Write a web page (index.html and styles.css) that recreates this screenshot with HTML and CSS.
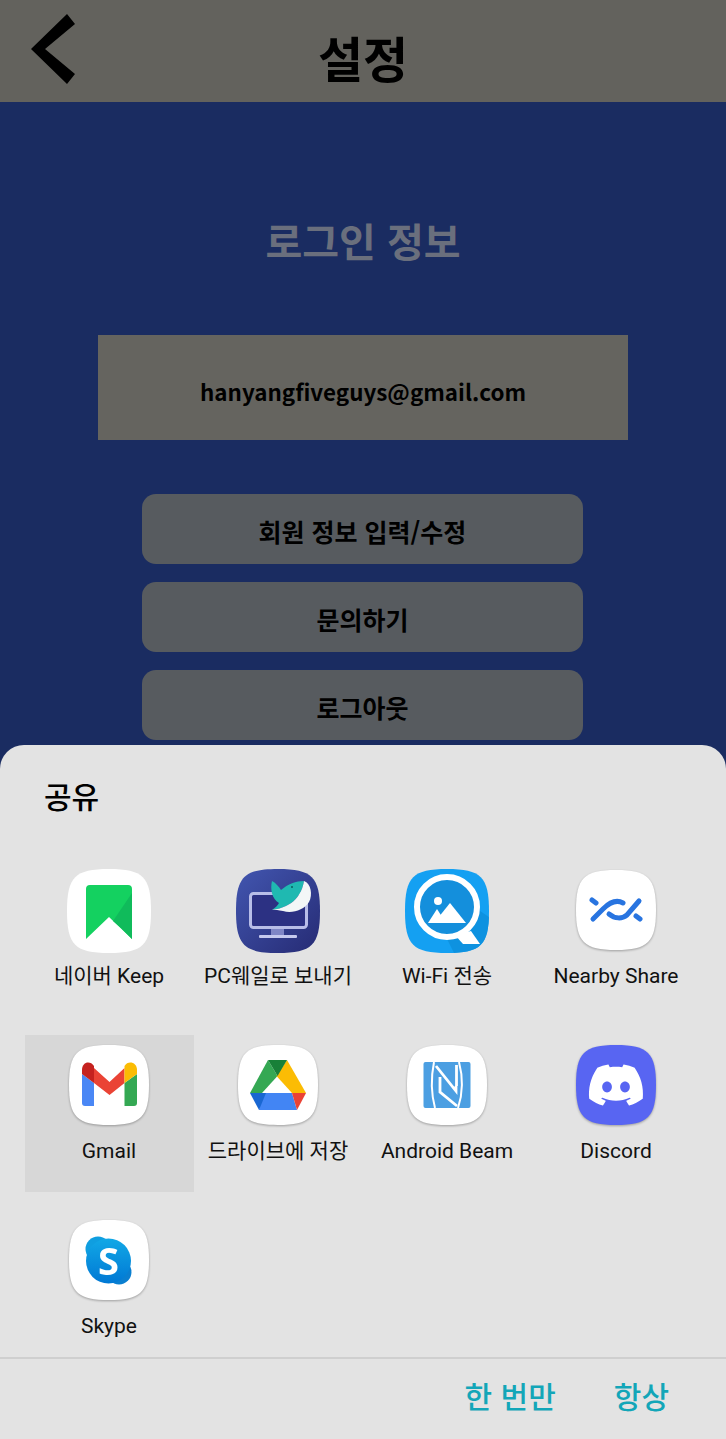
FILE: index.html
```html
<!DOCTYPE html>
<html lang="ko">
<head>
<meta charset="utf-8">
<title>설정</title>
<link rel="stylesheet" href="styles.css">
</head>
<body>
<div class="screen">
  <header class="topbar">
    <svg class="back" viewBox="0 0 44 70" aria-hidden="true"><polygon points="0,35 36,0 44,10 14,35 44,60 36,70"/></svg>
    <h1 class="topbar-title">설정</h1>
  </header>
  <main class="content">
    <h2 class="section-title">로그인 정보</h2>
    <div class="email">hanyangfiveguys@gmail.com</div>
    <div class="actions">
      <div class="action">회원 정보 입력/수정</div>
      <div class="action">문의하기</div>
      <div class="action">로그아웃</div>
    </div>
  </main>
  <section class="sheet">
    <div class="sheet-title">공유</div>
    <div class="apps">
      <div class="app">
        <svg class="icon icon-lg" viewBox="0 0 84 84"><path class="sq-white" d="M42 0C76 0 84 8 84 42S76 84 42 84 0 76 0 42 8 0 42 0Z"/><path fill="#14d160" d="M19 20q0-4 4-4h38q4 0 4 4v50L42 48 19 70Z"/><path fill="#10bb5b" d="M65 24V70L54 59 46 52Z"/></svg>
        <div class="label">네이버 Keep</div>
      </div>
      <div class="app">
        <svg class="icon icon-lg" viewBox="0 0 84 84"><defs><linearGradient id="pc" x1="0" y1="0" x2="1" y2="1"><stop offset="0" stop-color="#4256b0"/><stop offset="1" stop-color="#262b74"/></linearGradient></defs><path fill="url(#pc)" d="M42 0C76 0 84 8 84 42S76 84 42 84 0 76 0 42 8 0 42 0Z"/><rect x="14.500" y="24.500" width="56" height="34" rx="3" fill="#2c3183" stroke="#b8bde8" stroke-width="3"/><rect x="35" y="60" width="13" height="7" fill="#7f86c6"/><rect x="23" y="66" width="38" height="3" rx="1" fill="#c5c9ee"/><path fill="#1fb9b1" d="M36 12C40 14 43 18 45 21 52 15 60 12 68 12 66 25 58 38 36 41 40 38 42 36 43 34 36 30 34 20 36 12Z"/><path fill="#f3f7f7" d="M68 12C75 14 77 26 73 33 68 41 56 45 47 42 42 41 40 41 36 41 58 38 66 25 68 12Z"/><circle cx="56" cy="18" r="1" fill="#0b5f60"/></svg>
        <div class="label">PC웨일로 보내기</div>
      </div>
      <div class="app">
        <svg class="icon icon-lg" viewBox="0 0 84 84"><defs><clipPath id="wf"><path d="M42 0C76 0 84 8 84 42S76 84 42 84 0 76 0 42 8 0 42 0Z"/></clipPath></defs><path fill="#14a0f2" d="M42 0C76 0 84 8 84 42S76 84 42 84 0 76 0 42 8 0 42 0Z"/><path fill="#0e92e0" clip-path="url(#wf)" d="M72 40 90 52V90H52L42 70Z"/><circle cx="42" cy="38" r="30" fill="#148fdc" stroke="#fff" stroke-width="6"/><path fill="#fff" d="M50 66 66 62 75 75H58Z"/><circle cx="33" cy="32" r="4" fill="#fff"/><path fill="#fff" d="M45 34 61 54H29Z"/><path fill="#fff" d="M32 40 41 54H23Z"/></svg>
        <div class="label">Wi-Fi 전송</div>
      </div>
      <div class="app">
        <svg class="icon icon-sm" viewBox="0 0 80 80"><path class="sq-white" d="M40 0C72 0 80 8 80 40S72 80 40 80 0 72 0 40 8 0 40 0Z"/><g fill="none" stroke="#2874e0" stroke-width="5" stroke-linecap="round"><path d="M17 49 27 39C33 33 40 29 47 33"/><path d="M33 44C39 49 46 49 51 45L63 31"/><path d="M16 30l4 3"/><path d="M60 46l4 3"/></g></svg>
        <div class="label">Nearby Share</div>
      </div>
      <div class="app app-active">
        <svg class="icon icon-sm" viewBox="0 0 80 80"><path class="sq-white" d="M40 0C72 0 80 8 80 40S72 80 40 80 0 72 0 40 8 0 40 0Z"/><path fill="#4a87f5" d="M13 29 25 38V61H16Q13 61 13 58Z"/><path fill="#34a853" d="M68 29 55.500 38V61H65Q68 61 68 58Z"/><path fill="#ea4335" d="M25 23 40.500 37 55.500 23V38L40.500 50 25 38Z"/><path fill="#c5221f" d="M13 29V25C13 17 21 15 25 21V38Z"/><path fill="#fbbc04" d="M68 29V25C68 17 59 15 55.500 21V38Z"/></svg>
        <div class="label">Gmail</div>
      </div>
      <div class="app">
        <svg class="icon icon-sm" viewBox="0 0 80 80"><path class="sq-white" d="M40 0C72 0 80 8 80 40S72 80 40 80 0 72 0 40 8 0 40 0Z"/><path fill="#34a853" d="M30 15 39.500 31 24 48H12Z"/><path fill="#fbbc04" d="M49 15 68 48H54L38.500 31Z"/><path fill="#4285f4" d="M24 48H54L59 65H21Z"/><path fill="#1967d2" d="M12 48H28L21 65Z"/><path fill="#ea4335" d="M54 48H68L59 65Z"/><path fill="#188038" d="M30 15H49L39.500 31Z"/></svg>
        <div class="label">드라이브에 저장</div>
      </div>
      <div class="app">
        <svg class="icon icon-sm" viewBox="0 0 80 80"><path class="sq-white" d="M40 0C72 0 80 8 80 40S72 80 40 80 0 72 0 40 8 0 40 0Z"/><rect x="16.500" y="17" width="47" height="46" rx="2" fill="#4c9fe2"/><g fill="none" stroke="#fff" stroke-width="2"><path d="M27 17C24 32 24 48 28 63"/><path d="M52 17C56 32 56 48 51 63"/></g><g fill="none" stroke="#fff" stroke-width="2.800"><path d="M29 21 49 46V41"/><path d="M33 32V47L50 61"/><path d="M49.500 20V41"/></g></svg>
        <div class="label">Android Beam</div>
      </div>
      <div class="app">
        <svg class="icon icon-sm" viewBox="0 0 80 80"><path fill="#5865f2" d="M40 0C72 0 80 8 80 40S72 80 40 80 0 72 0 40 8 0 40 0Z"/><g transform="translate(13 13) scale(2.250)"><path fill="#fff" d="M20.317 4.3698a19.7913 19.7913 0 00-4.8851-1.5152.0741.0741 0 00-.0785.0371c-.211.3753-.4447.8648-.6083 1.2495-1.8447-.2762-3.68-.2762-5.4868 0-.1636-.3933-.4058-.8742-.6177-1.2495a.077.077 0 00-.0785-.037 19.7363 19.7363 0 00-4.8852 1.515.0699.0699 0 00-.0321.0277C.5334 9.0458-.319 13.5799.0992 18.0578a.0824.0824 0 00.0312.0561c2.0528 1.5076 4.0413 2.4228 5.9929 3.0294a.0777.0777 0 00.0842-.0276c.4616-.6304.8731-1.2952 1.226-1.9942a.076.076 0 00-.0416-.1057c-.6528-.2476-1.2743-.5495-1.8722-.8923a.077.077 0 01-.0076-.1277c.1258-.0943.2517-.1923.3718-.2914a.0743.0743 0 01.0776-.0105c3.9278 1.7933 8.18 1.7933 12.0614 0a.0739.0739 0 01.0785.0095c.1202.099.246.1981.3728.2924a.077.077 0 01-.0066.1276 12.2986 12.2986 0 01-1.873.8914.0766.0766 0 00-.0407.1067c.3604.698.7719 1.3628 1.225 1.9932a.076.076 0 00.0842.0286c1.961-.6067 3.9495-1.5219 6.0023-3.0294a.077.077 0 00.0313-.0552c.5004-5.177-.8382-9.6739-3.5485-13.6604a.061.061 0 00-.0312-.0286zM8.02 15.3312c-1.1825 0-2.1569-1.0857-2.1569-2.419 0-1.3332.9555-2.4189 2.157-2.4189 1.2108 0 2.1757 1.0952 2.1568 2.419 0 1.3332-.9555 2.4189-2.1569 2.4189zm7.9748 0c-1.1825 0-2.1569-1.0857-2.1569-2.419 0-1.3332.9554-2.4189 2.1569-2.4189 1.2108 0 2.1757 1.0952 2.1568 2.419 0 1.3332-.946 2.4189-2.1568 2.4189Z"/></g></svg>
        <div class="label">Discord</div>
      </div>
      <div class="app">
        <svg class="icon icon-sm" viewBox="0 0 80 80"><defs><linearGradient id="sk" x1="0" y1="0" x2="0" y2="1"><stop offset="0" stop-color="#12a8e6"/><stop offset="1" stop-color="#0078d4"/></linearGradient></defs><path class="sq-white" d="M40 0C72 0 80 8 80 40S72 80 40 80 0 72 0 40 8 0 40 0Z"/><circle cx="29" cy="29" r="12.500" fill="#0f9ee0"/><circle cx="50" cy="52" r="12.500" fill="#0a7fd0"/><circle cx="39.500" cy="41" r="22.500" fill="url(#sk)"/><text class="skype-s" x="39.500" y="55">S</text></svg>
        <div class="label">Skype</div>
      </div>
    </div>
    <footer class="sheet-footer">
      <span class="sheet-btn">한 번만</span>
      <span class="sheet-btn">항상</span>
    </footer>
  </section>
</div>
</body>
</html>
```

FILE: styles.css
```css
* { box-sizing: border-box; }
html, body { margin: 0; padding: 0; }
body { font-family: "Noto Sans CJK KR", "Noto Sans", sans-serif; }
.screen { position: relative; width: 726px; height: 1439px; overflow: hidden; background: #1a2c61; }

.topbar { height: 102px; background: #63625d; display: grid; grid-template-columns: 1fr auto 1fr; align-items: center; }
.back { width: 44px; height: 70px; margin-left: 31px; fill: #000; margin-top: -4px; }
.topbar-title { margin: 12px 0 0; font-size: 49px; line-height: 60px; font-weight: 700; color: #000; }

.content { display: flex; flex-direction: column; align-items: center; padding-top: 113px; }
.section-title { margin: 0 0 2px; font-size: 40px; line-height: 50px; font-weight: 700; color: #6a6f7d; }
.email { margin-top: 68px; width: 530px; height: 105px; padding-top: 6px; background: #65645f; display: flex; align-items: center; justify-content: center; font-size: 22.400px; font-weight: 700; color: #000; }
.actions { margin: 54px 1px 0 0; width: 441px; display: flex; flex-direction: column; gap: 18px; }
.action { height: 70px; padding-top: 4px; border-radius: 14px; background: #575b5f; display: flex; align-items: center; justify-content: center; font-size: 25px; font-weight: 700; color: #000; }

.sheet { position: absolute; left: 0; right: 0; bottom: 0; top: 745px; background: #e3e3e3; border-radius: 24px 24px 0 0; padding-top: 30px; }
.sheet-title { padding-left: 44px; font-size: 30px; line-height: 40px; font-weight: 500; color: #000; }
.apps { margin: 45px 0 0 25px; display: grid; grid-template-columns: repeat(4, 169px); grid-template-rows: 157px 157px 137px; row-gap: 18px; }
.app { padding: 9px 1px 0 0; display: flex; flex-direction: column; align-items: center; }
.app-active { background: #d7d7d7; }
.icon { display: block; flex: none; }
.icon-lg { width: 84px; height: 84px; }
.icon-sm { width: 80px; height: 80px; margin: 1px 0 3px; filter: drop-shadow(0 1px 1px rgba(0,0,0,.3)); }
.sq-white { fill: #fff; }
.label { margin-top: 9px; font-family: Roboto, "Noto Sans CJK KR", sans-serif; font-size: 21px; line-height: 28px; color: #111; white-space: nowrap; }
.skype-s { font-family: "Noto Sans", sans-serif; font-weight: 700; font-size: 38px; fill: #fff; text-anchor: middle; }

.sheet-footer { position: absolute; left: 0; right: 0; bottom: 0; height: 82px; border-top: 2px solid #cfcfcf; display: flex; justify-content: flex-end; align-items: center; gap: 58px; padding: 0 57px 8px 0; }
.sheet-btn { font-size: 30px; line-height: 40px; font-weight: 500; color: #13a6b8; }
```
